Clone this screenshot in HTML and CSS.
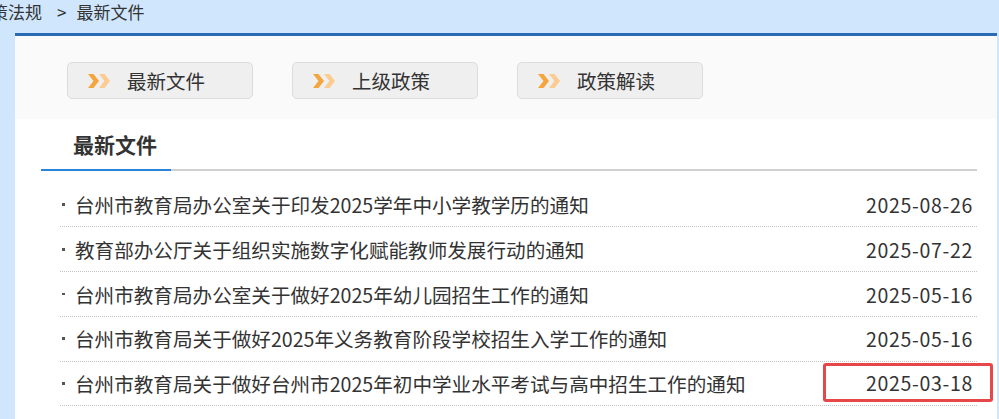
FILE: index.html
```html
<!DOCTYPE html>
<html lang="zh-CN">
<head>
<meta charset="utf-8">
<title>最新文件</title>
<link rel="stylesheet" href="styles.css">
</head>
<body>
<div class="crumb"><span class="crumb-prev">政策法规</span><span class="crumb-sep">&gt;</span><span>最新文件</span></div>
<div class="panel">
  <div class="tabs">
    <a class="tab-btn"><svg class="arr" viewBox="0 0 24 14" width="24" height="14"><polygon points="0,0 5.5,0 11,7 5.5,14 0,14 5.5,7" fill="#f5a53c"/><polygon points="11,0 16.5,0 22,7 16.5,14 11,14 16.5,7" fill="#fbcb8f"/></svg><span>最新文件</span></a>
    <a class="tab-btn"><svg class="arr" viewBox="0 0 24 14" width="24" height="14"><polygon points="0,0 5.5,0 11,7 5.5,14 0,14 5.5,7" fill="#f5a53c"/><polygon points="11,0 16.5,0 22,7 16.5,14 11,14 16.5,7" fill="#fbcb8f"/></svg><span>上级政策</span></a>
    <a class="tab-btn"><svg class="arr" viewBox="0 0 24 14" width="24" height="14"><polygon points="0,0 5.5,0 11,7 5.5,14 0,14 5.5,7" fill="#f5a53c"/><polygon points="11,0 16.5,0 22,7 16.5,14 11,14 16.5,7" fill="#fbcb8f"/></svg><span>政策解读</span></a>
  </div>
  <div class="section">
    <div class="sec-head"><div class="sec-title">最新文件</div></div>
    <ul class="list">
      <li><span class="title"><span class="dot"></span>台州市教育局办公室关于印发2025学年中小学教学历的通知</span><span class="date">2025-08-26</span></li>
      <li><span class="title"><span class="dot"></span>教育部办公厅关于组织实施数字化赋能教师发展行动的通知</span><span class="date">2025-07-22</span></li>
      <li><span class="title"><span class="dot"></span>台州市教育局办公室关于做好2025年幼儿园招生工作的通知</span><span class="date">2025-05-16</span></li>
      <li><span class="title"><span class="dot"></span>台州市教育局关于做好2025年义务教育阶段学校招生入学工作的通知</span><span class="date">2025-05-16</span></li>
      <li><span class="title"><span class="dot"></span>台州市教育局关于做好台州市2025年初中学业水平考试与高中招生工作的通知</span><span class="date marked">2025-03-18</span></li>
    </ul>
  </div>
</div>
</body>
</html>
```
FILE: styles.css
```css
html, body {
  margin: 0;
  padding: 0;
}
body {
  width: 999px;
  height: 419px;
  overflow: hidden;
  background: #cfe6fd;
  font-family: "Noto Sans CJK SC", "Noto Sans", sans-serif;
  color: #333;
}
.crumb {
  height: 32.5px;
  font-size: 17px;
  line-height: 24px;
  color: #333;
  white-space: nowrap;
}
.crumb-prev {
  margin-left: -26px;
}
.crumb-sep {
  margin: 0 10px 0 15px;
}
.panel {
  margin: 0 2px 0 15px;
  border-top: 3px solid #2a6cb3;
  background: #fff;
  height: 400px;
}
.tabs {
  background: #fafafa;
  height: 83.5px;
  box-sizing: border-box;
  padding: 26.5px 0 0 52px;
  display: flex;
  gap: 39px;
}
.tab-btn {
  width: 186px;
  height: 37px;
  box-sizing: border-box;
  border: 1px solid #dcdcdc;
  border-radius: 5px;
  background: #efefef;
  display: flex;
  align-items: center;
  padding-left: 20px;
  font-size: 19.5px;
  color: #333;
}
.arr {
  margin-right: 15px;
  flex: none;
}
.section {
  padding: 0 20px 0 26px;
}
.sec-head {
  border-bottom: 2px solid #d0d0d0;
  display: flex;
}
.sec-title {
  width: 130px;
  height: 51.5px;
  box-sizing: border-box;
  padding-left: 32px;
  display: flex;
  align-items: center;
  font-size: 21px;
  font-weight: bold;
  color: #333;
  border-bottom: 2px solid #2a83da;
  margin-bottom: -2px;
}
.list {
  list-style: none;
  margin: 12.3px 0 0 19px;
  padding: 0;
}
.list li {
  height: 44.7px;
  box-sizing: border-box;
  border-bottom: 1px dotted #c4c4c4;
  display: flex;
  align-items: center;
  justify-content: space-between;
  font-size: 19.6px;
  color: #333;
  white-space: nowrap;
}
.title {
  display: inline-flex;
  align-items: center;
}
.dot {
  width: 2.5px;
  height: 2.5px;
  background: #555;
  margin: 0 10.5px 0 2px;
  flex: none;
}
.date {
  padding-right: 4px;
  font-size: 19.5px;
  letter-spacing: 0.7px;
}
.marked {
  position: relative;
  display: inline-block;
  line-height: 28px;
}
.marked::after {
  content: "";
  position: absolute;
  top: -6px;
  bottom: -5px;
  left: -43px;
  right: -16px;
  border: 3px solid #e8474a;
  border-radius: 3px;
}
```
